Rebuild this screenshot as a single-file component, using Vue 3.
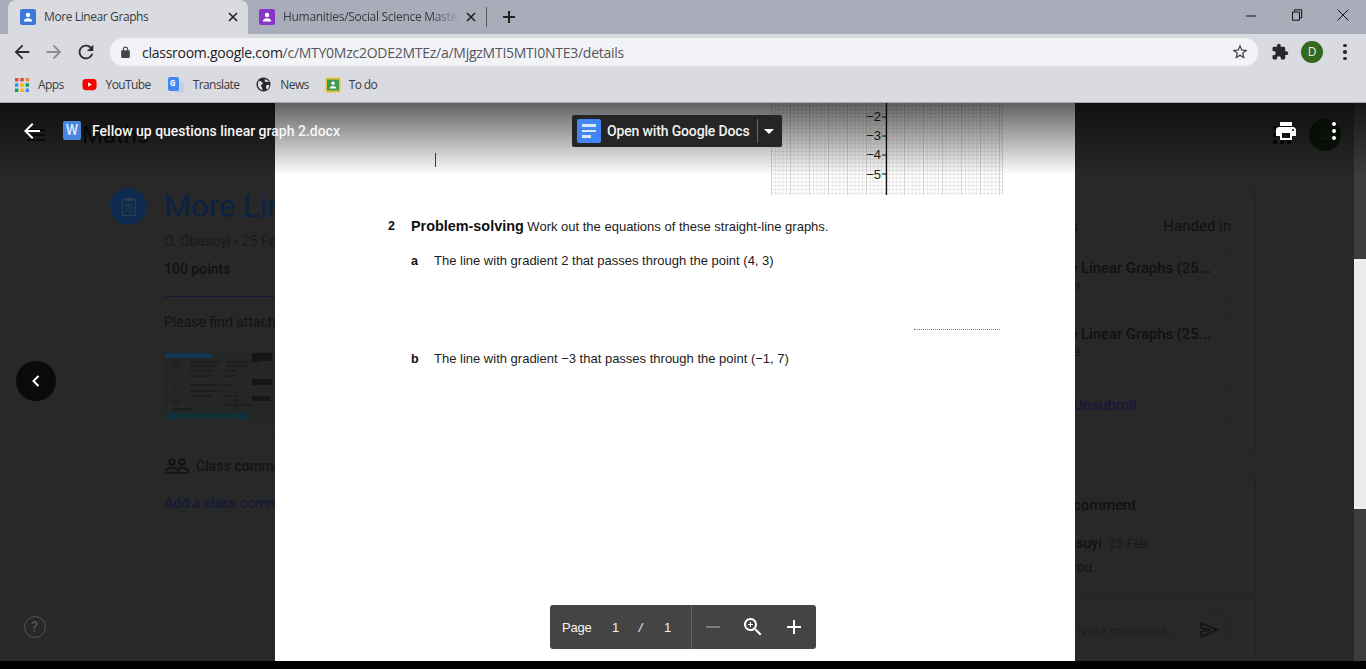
<script setup>
const minor = Array.from({ length: 62 }, (_, i) => i)
const major = Array.from({ length: 13 }, (_, i) => i)
const thumbText = [
  [10, 8, 8], [13, 8, 7], [10, 26, 30], [14, 26, 26], [19, 26, 24], [24, 26, 22], [33, 26, 40], [39, 26, 32], [44, 26, 22],
  [10, 62, 34], [14, 62, 22], [19, 60, 12], [24, 60, 10], [44, 60, 14], [53, 60, 30], [57, 8, 20], [37, 8, 7], [50, 8, 8]
]
</script>

<template>
  <div class="app">
    <header class="tabstrip">
      <div class="tab active">
        <span class="fav blue"><svg viewBox="0 0 16 16" width="16" height="16"><circle cx="8" cy="6" r="2.200" fill="#fff"/><path d="M3.800 12.500c0-2.200 2.200-3.200 4.200-3.200s4.200 1 4.200 3.200z" fill="#fff"/></svg></span>
        <span class="tab-title">More Linear Graphs</span>
        <svg class="close" viewBox="0 0 10 10" width="10" height="10"><path d="M1 1l8 8M9 1L1 9" stroke="#222" stroke-width="1.600"/></svg>
      </div>
      <div class="tab second">
        <span class="fav purple"><svg viewBox="0 0 16 16" width="16" height="16"><circle cx="8" cy="6" r="2.200" fill="#fff"/><path d="M3.800 12.500c0-2.200 2.200-3.200 4.200-3.200s4.200 1 4.200 3.200z" fill="#fff"/></svg></span>
        <span class="tab-title fade">Humanities/Social Science Masters</span>
        <svg class="close" viewBox="0 0 10 10" width="10" height="10"><path d="M1 1l8 8M9 1L1 9" stroke="#222" stroke-width="1.600"/></svg>
      </div>
      <span class="tab-sep"></span>
      <svg class="newtab" viewBox="0 0 14 14" width="14" height="14"><path d="M7 1v12M1 7h12" stroke="#222" stroke-width="2"/></svg>
      <div class="winctl">
        <svg viewBox="0 0 12 12" width="12" height="12"><path d="M1 7h10" stroke="#111" stroke-width="1"/></svg>
        <svg viewBox="0 0 12 12" width="12" height="12"><path d="M3.500 2.500V.8h7.200v8H8.500M1.500 3h7v8.200h-7z" fill="none" stroke="#111"/></svg>
        <svg viewBox="0 0 12 12" width="12" height="12"><path d="M.5.5l11 11M11.500.5l-11 11" stroke="#111"/></svg>
      </div>
    </header>

    <div class="toolbar">
      <svg class="tbi" viewBox="0 0 24 24" width="22" height="22"><path fill="#2b2c30" d="M20 11H7.830l5.590-5.590L12 4l-8 8 8 8 1.410-1.410L7.830 13H20v-2z"/></svg>
      <svg class="tbi" viewBox="0 0 24 24" width="22" height="22"><path fill="#8b8c92" d="M12 4l-1.410 1.410L16.170 11H4v2h12.170l-5.580 5.590L12 20l8-8z"/></svg>
      <svg class="tbi" viewBox="0 0 24 24" width="22" height="22"><path fill="#2b2c30" d="M17.650 6.350A7.958 7.958 0 0 0 12 4c-4.420 0-7.990 3.580-7.990 8s3.570 8 7.990 8c3.730 0 6.840-2.550 7.730-6h-2.080A5.990 5.990 0 0 1 12 18c-3.310 0-6-2.690-6-6s2.690-6 6-6c1.660 0 3.140.690 4.220 1.780L13 11h7V4l-2.350 2.350z"/></svg>
      <div class="omnibox">
        <svg viewBox="0 0 24 24" width="13" height="13"><path fill="#44454a" d="M18 8h-1V6c0-2.760-2.240-5-5-5S7 3.240 7 6v2H6c-1.100 0-2 .9-2 2v10c0 1.100.9 2 2 2h12c1.100 0 2-.9 2-2V10c0-1.100-.9-2-2-2zM9 6c0-1.660 1.340-3 3-3s3 1.340 3 3v2H9V6z"/></svg>
        <span class="url"><b>classroom.google.com</b>/c/MTY0Mzc2ODE2MTEz/a/MjgzMTI5MTI0NTE3/details</span>
        <svg class="star" viewBox="0 0 24 24" width="18" height="18"><path fill="#3a3b40" d="M22 9.240l-7.190-.62L12 2 9.190 8.630 2 9.240l5.460 4.730L5.820 21 12 17.270 18.180 21l-1.630-7.030L22 9.240zM12 15.400l-3.760 2.270 1-4.280-3.320-2.880 4.380-.38L12 6.100l1.710 4.040 4.380.38-3.320 2.880 1 4.280L12 15.400z"/></svg>
      </div>
      <svg class="ext" viewBox="0 0 24 24" width="18" height="18"><path fill="#26272b" d="M20.500 11H19V7c0-1.100-.9-2-2-2h-4V3.500C13 2.120 11.880 1 10.500 1S8 2.120 8 3.500V5H4c-1.100 0-1.990.9-1.990 2v3.800H3.500c1.490 0 2.700 1.210 2.700 2.700s-1.210 2.700-2.700 2.700H2V20c0 1.100.9 2 2 2h3.800v-1.500c0-1.490 1.210-2.700 2.700-2.700 1.490 0 2.700 1.210 2.700 2.700V22H17c1.100 0 2-.9 2-2v-4h1.500c1.380 0 2.500-1.120 2.500-2.500S21.880 11 20.500 11z"/></svg>
      <span class="profile">D</span>
      <span class="chromemenu"><i></i><i></i><i></i></span>
    </div>

    <nav class="bookmarks">
      <a class="bm"><svg viewBox="0 0 14 14" width="14" height="14"><rect x="0" y="0" width="3.400" height="3.400" fill="#db4437"/><rect x="5.300" y="0" width="3.400" height="3.400" fill="#db4437"/><rect x="10.600" y="0" width="3.400" height="3.400" fill="#e8833a"/><rect x="0" y="5.300" width="3.400" height="3.400" fill="#4285f4"/><rect x="5.300" y="5.300" width="3.400" height="3.400" fill="#f4b400"/><rect x="10.600" y="5.300" width="3.400" height="3.400" fill="#0f9d58"/><rect x="0" y="10.600" width="3.400" height="3.400" fill="#0f9d58"/><rect x="5.300" y="10.600" width="3.400" height="3.400" fill="#f4b400"/><rect x="10.600" y="10.600" width="3.400" height="3.400" fill="#4285f4"/></svg>Apps</a>
      <a class="bm"><svg viewBox="0 0 16 16" width="15" height="15"><rect x="0.500" y="2" width="15" height="12" rx="3.500" fill="#f00"/><path d="M6.500 5.500v5l4-2.500z" fill="#fff"/></svg>YouTube</a>
      <a class="bm"><span class="gt"><span class="gt-front"></span><span class="gt-back"></span><span class="gt-g">G</span></span>Translate</a>
      <a class="bm"><svg viewBox="0 0 16 16" width="15" height="15"><circle cx="8" cy="8" r="7.500" fill="#26272b"/><path d="M3 4c2 0 3 1 4 2s-.5 2-1.500 2.500S7 11 7 14c-3-.5-5-3-5-6 0-1.500.5-3 1-4zM10 2c1 1 3 1.500 4 3-1 .5-3 .5-4 0s-1-2 0-3zM11 9c1-.5 2.500-.5 3.500 0-.5 2-1.500 3.500-3 4.500-.5-1.500-1.500-3.500-.5-4.500z" fill="#d9dbe0"/></svg>News</a>
      <a class="bm"><svg viewBox="0 0 16 16" width="16" height="16"><rect x="0.500" y="0.500" width="15" height="15" rx="1.500" fill="#e8c13a"/><rect x="2" y="2.500" width="12" height="11" fill="#3a9a52"/><circle cx="8" cy="6.300" r="1.700" fill="#fff"/><path d="M4.500 11.500c0-1.800 1.700-2.600 3.500-2.600s3.500.8 3.500 2.600z" fill="#fff"/></svg>To do</a>
    </nav>

    <div class="stage">
      <!-- dimmed classroom page underneath -->
      <div class="page">
        <div class="under-head">
          <svg viewBox="0 0 24 24" width="24" height="24"><path fill="#0a0a0a" d="M3 18h18v-2H3v2zm0-5h18v-2H3v2zm0-7v2h18V6H3z"/></svg>
          <span class="maths">Maths</span>
          <svg class="under-grid" viewBox="0 0 18 18" width="18" height="18"><path fill="#0a0a0a" d="M0 0h4v4H0zM7 0h4v4H7zM14 0h4v4h-4zM0 7h4v4H0zM7 7h4v4H7zM14 7h4v4h-4zM0 14h4v4H0zM7 14h4v4H7zM14 14h4v4h-4z"/></svg>
          <span class="under-avatar">D</span>
        </div>
        <div class="under-main">
          <div class="under-left">
            <span class="under-circle"><svg viewBox="0 0 24 24" width="24" height="24"><path fill="none" stroke="#2a3a50" stroke-width="1.500" d="M5.500 4.500h13v16h-13zM9 3.500h6v2H9zM8.500 10h7M8.500 13h7M8.500 16h7"/></svg></span>
            <div class="under-body">
              <div class="under-title">More Linear Graphs</div>
              <div class="under-sub">O. Obasuyi • 25 Feb</div>
              <div class="under-points">100 points</div>
              <div class="under-rule"></div>
              <div class="under-desc">Please find attached</div>
              <svg class="thumb" viewBox="0 0 110 68" width="110" height="68">
                <rect width="110" height="68" fill="#252626"/>
                <rect x="1" y="1" width="47" height="5" fill="#123750"/>
                <path v-for="(t, i) in thumbText" :key="i" :d="`M${t[1]} ${t[0]}h${t[2]}`" stroke="#161616" stroke-width="1"/>
                <rect x="88" y="1" width="20" height="8" fill="#161616"/>
                <rect x="88" y="27" width="20" height="6" fill="#161616"/>
                <rect x="88" y="44" width="18" height="5" fill="#161616"/>
                <path d="M72 40v18M66 48h14" stroke="#1a1a1a" stroke-width="1"/>
                <rect x="1" y="61" width="85" height="6" fill="#10303a"/>
              </svg>
              <div class="under-rule2"></div>
              <div class="under-cc">
                <svg viewBox="0 0 24 24" width="26" height="26"><path fill="#111" d="M16.500 13c-1.200 0-3.070.34-4.500 1-1.430-.67-3.300-1-4.500-1C5.330 13 1 14.080 1 16.250V19h22v-2.750c0-2.170-4.330-3.250-6.500-3.250zm-4 4.500h-10v-1.250c0-.54 2.560-1.750 5-1.750s5 1.210 5 1.750v1.250zm9 0H14v-1.250c0-.46-.2-.86-.52-1.220.88-.3 1.960-.53 3.020-.53 2.440 0 5 1.210 5 1.750v1.250zM7.500 12c1.930 0 3.500-1.570 3.500-3.500S9.430 5 7.500 5 4 6.570 4 8.500 5.570 12 7.500 12zm0-5.500c.83 0 1.500.67 1.500 1.500s-.67 1.500-1.500 1.500S6 8.830 6 8s.67-1.500 1.500-1.500zm9 5.500c1.930 0 3.500-1.570 3.500-3.500S18.430 5 16.500 5 13 6.570 13 8.500s1.570 3.500 3.500 3.500zm0-5.500c.83 0 1.500.67 1.500 1.500s-.67 1.500-1.500 1.500S15 8.830 15 8s.67-1.500 1.500-1.500z"/></svg>
                <span>Class comments</span>
              </div>
              <div class="under-add">Add a class comment</div>
            </div>
          </div>
          <aside class="under-right">
            <section class="card work">
              <div class="work-head"><span class="yw">Your work</span><span>Handed in</span></div>
              <div class="att"><div class="att-t">More Linear Graphs (25...</div><div class="att-s">Word file</div></div>
              <div class="att"><div class="att-t">More Linear Graphs (25...</div><div class="att-s">Word file</div></div>
              <div class="unsub"><span>Unsubmit</span></div>
            </section>
            <section class="card priv">
              <div class="priv-top">
                <div class="priv-h">Private comment</div>
                <div class="priv-n">O. Obasuyi <em>25 Feb</em></div>
                <div class="priv-b">Thank you.</div>
              </div>
              <div class="priv-in"><span>Add private comment...</span>
                <svg viewBox="0 0 24 24" width="22" height="22"><path d="M3.500 4.500L21 12 3.500 19.500V14l10-2-10-2z" fill="none" stroke="#141414" stroke-width="1.800"/></svg>
              </div>
            </section>
          </aside>
        </div>
        <div class="scrollbar"><div class="thumb-y"></div></div>
      </div>

      <!-- document preview overlay -->
      <div class="viewer">
        <div class="paper-wrap">
          <article class="paper">
            <div class="graph">
              <svg viewBox="0 0 232 92" width="232" height="92">
                <path v-for="i in minor" :key="i" :d="`M${i * 3.8 + 0.5} 0V92`" stroke="#d6d6d6" stroke-width="0.5"/>
                <path v-for="i in 25" :key="'h' + i" :d="`M0 ${i * 3.8 - 1}H232`" stroke="#d2d2d2" stroke-width="0.5"/>
                <path v-for="i in major" :key="'m' + i" :d="`M${i * 19 + 0.5} 0V92`" stroke="#c8c8c8" stroke-width="0.6"/>
                <path d="M231.500 0V92" stroke="#cfcfcf" stroke-width="0.7"/>
                <path d="M115.500 0V92" stroke="#111" stroke-width="1.300"/>
                <path d="M111 14h4M111 33h4M111 52h4M111 71h4" stroke="#111"/>
              </svg>
              <span class="tick t2">−2</span><span class="tick t3">−3</span><span class="tick t4">−4</span><span class="tick t5">−5</span>
            </div>
            <div class="q"><b class="qn">2</b><div><b class="ps">Problem-solving</b> Work out the equations of these straight-line graphs.</div></div>
            <div class="q sub suba"><b class="qn">a</b><div>The line with gradient 2 that passes through the point (4, 3)</div></div>
            <div class="dots"></div>
            <div class="q sub"><b class="qn">b</b><div>The line with gradient −3 that passes through the point (−1, 7)</div></div>
          </article>
          <span class="caret"></span>
        </div>
        <div class="blackbar"></div>

        <div class="shade">
          <svg class="backw" viewBox="0 0 24 24" width="24" height="24"><path fill="#fff" d="M20 11H7.830l5.590-5.590L12 4l-8 8 8 8 1.410-1.410L7.830 13H20v-2z"/></svg>
          <span class="wordicon">W</span>
          <span class="fname">Fellow up questions linear graph 2.docx</span>
          <span class="spacer"></span>
          <svg class="printer" viewBox="0 0 24 24" width="24" height="24"><path fill="#fff" d="M19 8H5c-1.660 0-3 1.340-3 3v6h4v4h12v-4h4v-6c0-1.660-1.340-3-3-3zm-3 11H8v-5h8v5zm3-7c-.55 0-1-.45-1-1s.45-1 1-1 1 .45 1 1-.45 1-1 1zm-1-9H6v4h12V3z"/></svg>
          <span class="vmenu"><i></i><i></i><i></i></span>
        </div>

        <div class="opendocs">
          <span class="docsicon"><i></i><i></i><i></i></span>
          <span class="openlabel">Open with Google Docs</span>
          <span class="odiv"></span>
          <span class="tri"></span>
        </div>

        <button class="prevbtn"><svg viewBox="0 0 14 14" width="14" height="14"><path d="M9.500 2L4.500 7l5 5" fill="none" stroke="#fff" stroke-width="2"/></svg></button>
        <span class="help">?</span>

        <div class="pager">
          <span class="plabel">Page</span>
          <span class="pnum n1">1</span>
          <span class="pnum slash">/</span>
          <span class="pnum n2">1</span>
          <span class="pdiv"></span>
          <svg class="pminus" viewBox="0 0 16 16" width="16" height="16"><path d="M1 8h14" stroke="#8e8e8e" stroke-width="1.500"/></svg>
          <svg class="pzoom" viewBox="0 0 24 24" width="24" height="24"><path fill="#fff" d="M15.500 14h-.79l-.28-.27C15.410 12.590 16 11.110 16 9.500 16 5.910 13.090 3 9.500 3S3 5.910 3 9.500 5.910 16 9.500 16c1.610 0 3.090-.59 4.230-1.570l.27.28v.79l5 4.990L20.490 19l-4.990-5zm-6 0C7.010 14 5 11.990 5 9.500S7.010 5 9.500 5 14 7.010 14 9.500 11.990 14 9.500 14zM12 10h-2v2H9v-2H7V9h2V7h1v2h2v1z"/></svg>
          <svg class="pplus" viewBox="0 0 16 16" width="16" height="16"><path d="M8 1v14M1 8h14" stroke="#fff" stroke-width="2"/></svg>
        </div>
      </div>
    </div>
  </div>
</template>

<style>
html, body { margin: 0; padding: 0; overflow: hidden; background: #000; }
</style>

<style scoped>
.app { width: 1366px; height: 669px; display: flex; flex-direction: column; overflow: hidden; font-family: "Open Sans", "Noto Sans", sans-serif; }

/* tab strip */
.tabstrip { height: 34px; flex: none; background: #a9acb9; display: flex; align-items: flex-end; padding-left: 8px; box-sizing: border-box; }
.tab { height: 34px; width: 240px; flex: none; box-sizing: border-box; display: flex; align-items: center; padding: 0 10px 1px 12px; font-size: 12px; color: #3a3b40; }
.tab.active { background: #d9dbe0; border-radius: 8px 8px 0 0; }
.tab.second { width: 238px; padding-left: 11px; }
.fav { width: 16px; height: 16px; border-radius: 2px; flex: none; margin-right: 8px; display: block; }
.fav svg { display: block; }
.fav.blue { background: #3b78d8; }
.fav.purple { background: #8a34c9; }
.tab-title { flex: 1; white-space: nowrap; overflow: hidden; letter-spacing: -0.4px; }
.second .tab-title { letter-spacing: -0.3px; }
.fade { -webkit-mask-image: linear-gradient(90deg, #000 84%, transparent); mask-image: linear-gradient(90deg, #000 84%, transparent); }
.close { flex: none; margin-left: 6px; }
.tab-sep { width: 1px; height: 20px; background: #55565c; margin: 0 0 7px 0; flex: none; }
.newtab { flex: none; margin: 0 0 10px 15px; }
.winctl { margin-left: auto; display: flex; gap: 34px; padding: 0 17px 13px 0; }

/* toolbar */
.toolbar { height: 37px; flex: none; background: #d9dbe0; display: flex; align-items: center; padding: 0 0 1px 11px; box-sizing: border-box; }
.tbi { flex: none; margin-right: 10px; }
.omnibox { width: 1148px; height: 28px; flex: none; margin-left: 3px; background: #f2f3f7; border-radius: 14px; display: flex; align-items: center; padding: 0 9px 0 9px; box-sizing: border-box; }
.url { margin-left: 10px; font-size: 14px; color: #55565c; white-space: nowrap; letter-spacing: -0.26px; }
.url b { font-weight: 400; color: #202124; }
.star { margin-left: auto; }
.ext { margin-left: 13px; flex: none; }
.profile { width: 22px; height: 22px; border-radius: 50%; background: #33691e; color: #e8f0e0; font-size: 12px; line-height: 22px; text-align: center; margin-left: 12px; flex: none; }
.chromemenu { display: flex; flex-direction: column; gap: 3px; margin-left: 20px; flex: none; }
.chromemenu i, .vmenu i { display: block; border-radius: 50%; }
.chromemenu i { width: 3.500px; height: 3.500px; background: #2b2c30; }

/* bookmarks */
.bookmarks { height: 32px; flex: none; background: #d9dbe0; border-bottom: 1px solid #a8a9ad; box-sizing: border-box; display: flex; align-items: center; padding: 0 0 4px 15px; font-size: 12px; color: #3a3b40; }
.bm { display: flex; align-items: center; gap: 9px; margin-right: 17px; white-space: nowrap; letter-spacing: -0.6px; }
.bm:nth-child(5) { gap: 8px; margin-left: -1px; }
.bm:nth-child(2) { margin-left: 1px; }
.gt { width: 16px; height: 16px; position: relative; display: block; }
.gt-front { position: absolute; left: 6px; top: 4px; width: 10px; height: 12px; background: #c6d0e4; border-radius: 2px; }
.gt-back { position: absolute; left: 0; top: 0; width: 11px; height: 14px; background: #4285f4; border-radius: 2px; }
.gt-g { position: absolute; left: 2px; top: 1px; font-size: 8px; line-height: 10px; letter-spacing: 0; color: #fff; font-weight: 700; }

/* stage */
.stage { flex: 1; min-height: 0; position: relative; }
.page { height: 100%; background: #282828; display: flex; flex-direction: column; position: relative; padding-right: 12px; box-sizing: border-box; font-family: Roboto, sans-serif; color: #141414; overflow: hidden; }
.under-head { height: 65px; flex: none; box-sizing: border-box; border-bottom: 1px solid #242424; display: flex; align-items: center; padding: 0 13px 0 24px; }
.maths { margin-left: 34px; font-size: 24px; color: #0b0b0b; }
.under-grid { margin-left: auto; margin-right: 18px; }
.under-avatar { width: 32px; height: 32px; border-radius: 50%; background: #0a140a; color: #162016; line-height: 32px; text-align: center; font-size: 16px; }
.under-main { flex: 1; min-height: 0; display: flex; padding-left: 110px; box-sizing: border-box; }
.under-left { width: 890px; flex: none; display: flex; padding-top: 20px; box-sizing: border-box; }
.under-circle { width: 37px; height: 37px; background: #0d2b50; border-radius: 50%; display: flex; align-items: center; justify-content: center; flex: none; }
.under-body { margin-left: 17px; flex: 1; }
.under-title { font-size: 31px; line-height: 38px; color: #0a2244; white-space: nowrap; }
.under-sub { font-size: 14px; line-height: 20px; margin-top: 5px; color: #1a1a1a; }
.under-points { font-size: 14px; font-weight: 500; line-height: 20px; margin-top: 8px; color: #111; }
.under-rule { height: 1px; background: #101c30; margin-top: 17px; }
.under-desc { font-size: 14px; line-height: 20px; margin-top: 15px; color: #131313; white-space: nowrap; }
.thumb { display: block; margin-top: 20px; }
.under-rule2 { height: 1px; background: #232323; margin-top: 17px; }
.under-cc { display: flex; align-items: center; gap: 6px; margin-top: 15px; font-size: 14px; font-weight: 500; color: #141414; white-space: nowrap; height: 26px; }
.under-add { margin-top: 16px; font-size: 14px; font-weight: 500; color: #141a38; white-space: nowrap; }
.under-right { width: 256px; flex: none; padding-top: 19px; box-sizing: border-box; }
.card { border: 1px solid #232323; border-radius: 8px; box-sizing: border-box; padding: 0 24px; }
.work { height: 268px; }
.work-head { display: flex; justify-content: space-between; align-items: center; font-size: 15px; height: 60px; padding-top: 16px; box-sizing: border-box; color: #111; }
.yw { margin-left: -13px; }
.att { height: 58px; border: 1px solid #232323; border-radius: 6px; margin-bottom: 8px; box-sizing: border-box; padding: 9px 8px 0 17px; }
.att-t { font-size: 14.800px; font-weight: 500; line-height: 20px; color: #111; white-space: nowrap; }
.att-s { font-size: 12px; line-height: 16px; color: #171717; white-space: nowrap; margin-left: -10px; }
.unsub { height: 34px; margin-top: 16px; border: 1px solid #232323; border-radius: 4px; box-sizing: border-box; padding-left: 47px; font-size: 15px; font-weight: 500; line-height: 32px; color: #171738; }
.priv { margin-top: 20px; height: 200px; border-bottom: none; padding: 0; border-radius: 8px 8px 0 0; }
.priv-top { height: 119px; border-bottom: 1px solid #222; box-sizing: border-box; padding: 19px 24px 0; }
.priv-h { font-size: 15px; font-weight: 500; line-height: 20px; color: #111; margin-left: -2px; letter-spacing: -0.1px; }
.priv-n { margin-top: 20px; font-size: 14px; font-weight: 500; color: #111; padding-left: 10px; }
.priv-n em { font-style: normal; font-weight: 400; font-size: 12.500px; color: #181818; margin-left: 4px; }
.priv-b { margin-top: 8px; font-size: 14px; color: #131313; padding-left: 3px; }
.priv-in { margin: 16px 24px 0; height: 36px; border: 1px solid #232323; border-radius: 18px; display: flex; align-items: center; justify-content: space-between; padding: 0 10px 0 12px; font-size: 13.500px; color: #1e1e1e; white-space: nowrap; }
.scrollbar { position: absolute; right: 0; top: 0; bottom: 0; width: 12px; background: #3c3c3c; }
.thumb-y { margin-top: 156px; height: 250px; background: #ebebeb; }

/* viewer */
.viewer { position: absolute; inset: 0; display: flex; flex-direction: column; color: #fff; }
.paper-wrap { flex: 1; min-height: 0; position: relative; margin-left: 275px; width: 800px; }
.paper { width: 800px; height: 100%; background: #fff; box-sizing: border-box; padding-left: 113px; font-family: "Liberation Sans", Arial, sans-serif; font-size: 13px; color: #1c1c1c; }
.graph { width: 232px; height: 92px; margin-left: 383px; position: relative; }
.graph svg { display: block; }
.tick { position: absolute; right: 122px; font-size: 13px; line-height: 14px; color: #222; }
.t2 { top: 7px; }
.t3 { top: 26px; }
.t4 { top: 45px; }
.t5 { top: 65px; }
.q { display: flex; margin-top: 22px; line-height: 18px; }
.qn { width: 23px; flex: none; color: #111; font-size: 12.500px; }
.ps { font-size: 14.400px; color: #111; }
.sub { margin-left: 23px; }
.suba { margin-top: 16px; }
.dots { width: 86px; height: 0; border-bottom: 1px dotted #777; margin: 59px 0 0 526px; }
.q.sub:last-child { margin-top: 20px; }
.caret { position: absolute; left: 160px; top: 50px; width: 1px; height: 14px; background: #444; }
.blackbar { width: 100%; height: 8px; flex: none; background: #000; }

.shade { position: absolute; left: 0; right: 0; top: 0; height: 72px; background: linear-gradient(rgba(0,0,0,.62), rgba(0,0,0,0)); display: flex; align-items: flex-start; padding: 16px 20px 0 20px; box-sizing: border-box; }
.backw { flex: none; }
.wordicon { width: 18px; height: 19px; background: #4a86e0; border-radius: 2px; font: 500 14px/19px Roboto, sans-serif; color: #dbe8ff; text-align: center; margin: 2px 0 0 19px; flex: none; }
.fname { font-family: Roboto, sans-serif; font-size: 14px; font-weight: 500; line-height: 24px; margin-left: 11px; white-space: nowrap; color: #f6f6f6; }
.spacer { flex: 1; }
.printer { flex: none; }
.vmenu { display: flex; flex-direction: column; gap: 3px; margin: 3px 10px 0 34px; flex: none; }
.vmenu i { width: 4px; height: 4px; background: #fff; }

.opendocs { position: absolute; left: 572px; top: 12px; width: 210px; height: 32px; background: #252525; border-radius: 2px; display: flex; align-items: center; box-sizing: border-box; padding-left: 5px; font-family: Roboto, sans-serif; }
.docsicon { width: 24px; height: 24px; background: #4285f4; border-radius: 2px; flex: none; display: flex; flex-direction: column; gap: 3px; align-items: center; justify-content: center; }
.docsicon i { display: block; height: 2.500px; width: 14px; background: #dbe6fb; }
.docsicon i:last-child { width: 9px; margin-right: 5px; }
.openlabel { font-size: 14px; font-weight: 500; margin-left: 6px; white-space: nowrap; letter-spacing: -0.15px; color: #f2f2f2; }
.odiv { position: absolute; left: 185px; top: 4px; width: 1px; height: 24px; background: #666; }
.tri { position: absolute; left: 192px; top: 14px; width: 0; height: 0; border-left: 5px solid transparent; border-right: 5px solid transparent; border-top: 5px solid #fff; }

.prevbtn { position: absolute; left: 16px; top: 258px; width: 40px; height: 40px; border-radius: 50%; border: 0; background: #0a0a0a; padding: 0; display: flex; align-items: center; justify-content: center; }
.help { position: absolute; left: 23.500px; top: 513px; width: 20px; height: 20px; border: 1.500px solid #555; color: #555; border-radius: 50%; font: 500 14px/20px Roboto, sans-serif; text-align: center; }

.pager { position: absolute; left: 550px; bottom: 20px; width: 266px; height: 44px; background: #444; border-radius: 3px; font-family: "Liberation Sans", Arial, sans-serif; font-size: 13px; color: #f2f2f2; display: flex; align-items: center; }
.plabel { margin-left: 12px; letter-spacing: -0.2px; }
.pnum { width: 8px; text-align: center; }
.n1 { margin-left: 20px; }
.slash { margin-left: 17px; font-style: italic; }
.n2 { margin-left: 19px; }
.pdiv { width: 1px; height: 44px; background: #666; margin-left: 19px; }
.pminus { margin-left: 13px; }
.pzoom { margin-left: 20px; }
.pplus { margin-left: 21px; }
</style>
